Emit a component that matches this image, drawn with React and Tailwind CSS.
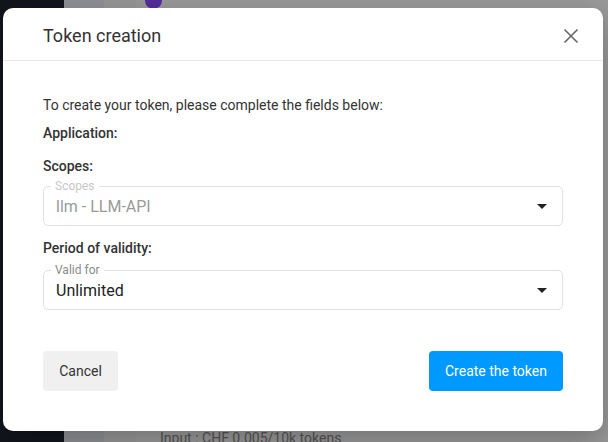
import React from "react";

const font = { fontFamily: "Roboto, 'Noto Sans', sans-serif" };

function Arrow() {
  return (
    <svg width="24" height="24" viewBox="0 0 24 24" className="shrink-0">
      <path d="M7 10l5 5 5-5z" fill="#222" />
    </svg>
  );
}

function Select({ label, value, disabled }) {
  return (
    <div className="relative h-10 w-full rounded-[5px] border border-[#e0e0e0] flex items-center pl-3 pr-2">
      <span
        className={
          "absolute -top-[8px] left-[7px] px-[4px] bg-white text-[12px] leading-[14px] " +
          (disabled ? "text-[#c8c8c8]" : "text-[#8a8a8a]")
        }
      >
        {label}
      </span>
      <span className={"flex-1 pt-[1px] text-[16px] leading-5 " + (disabled ? "text-[#9a9a9a]" : "text-[#222]")}>
        {value}
      </span>
      <Arrow />
    </div>
  );
}

export default function App() {
  return (
    <div className="relative w-[608px] h-[442px] overflow-hidden flex bg-white" style={font}>
      {/* page behind the dialog */}
      <aside className="w-[64px] h-full bg-[#1f2330]" />
      <nav className="w-[40px] h-full bg-[#eef0f8]" />
      <div className="w-[32px] h-full bg-[#fafafa]" />
      <main className="flex-1 h-full relative">
        <div className="absolute left-[9px] -top-[8px] w-[17px] h-[17px] rounded-full bg-[#8a4dff]" />
        <div className="absolute left-[24px] top-[428px] text-[14px] leading-5 text-[#8c8c8c]">
          Input : CHF 0.005/10k tokens
        </div>
      </main>

      {/* backdrop */}
      <div className="absolute inset-0 bg-black/40" />

      {/* dialog */}
      <div className="absolute left-[3px] top-[8px] w-[600px] h-[423px] bg-white rounded-[10px] shadow-[0_10px_30px_rgba(0,0,0,0.25)] flex flex-col">
        <header className="h-[53px] pl-10 pr-6 pt-[3px] flex items-center justify-between border-b border-[#e9e9e9]">
          <h2 className="text-[18px] text-[#333]">Token creation</h2>
          <svg width="16" height="16" viewBox="0 0 16 16">
            <path d="M1.5 1.5l13 13M14.5 1.5l-13 13" stroke="#666" strokeWidth="1.6" />
          </svg>
        </header>
        <div className="px-10 pt-[34px] flex flex-col text-[14px] leading-5 text-[#333]">
          <p>To create your token, please complete the fields below:</p>
          <p className="mt-2 font-medium">Application:</p>
          <p className="mt-[13px] font-medium">Scopes:</p>
          <div className="mt-[10px]">
            <Select label="Scopes" value="llm - LLM-API" disabled />
          </div>
          <p className="mt-3 font-medium">Period of validity:</p>
          <div className="mt-3">
            <Select label="Valid for" value="Unlimited" />
          </div>
          <div className="mt-[41px] flex justify-between">
            <button className="h-10 w-[75px] rounded-[4px] bg-[#f0f0f0] text-[14px] text-[#333]">Cancel</button>
            <button className="h-10 w-[134px] rounded-[4px] bg-[#0099ff] text-[14px] text-white">Create the token</button>
          </div>
        </div>
      </div>
    </div>
  );
}
